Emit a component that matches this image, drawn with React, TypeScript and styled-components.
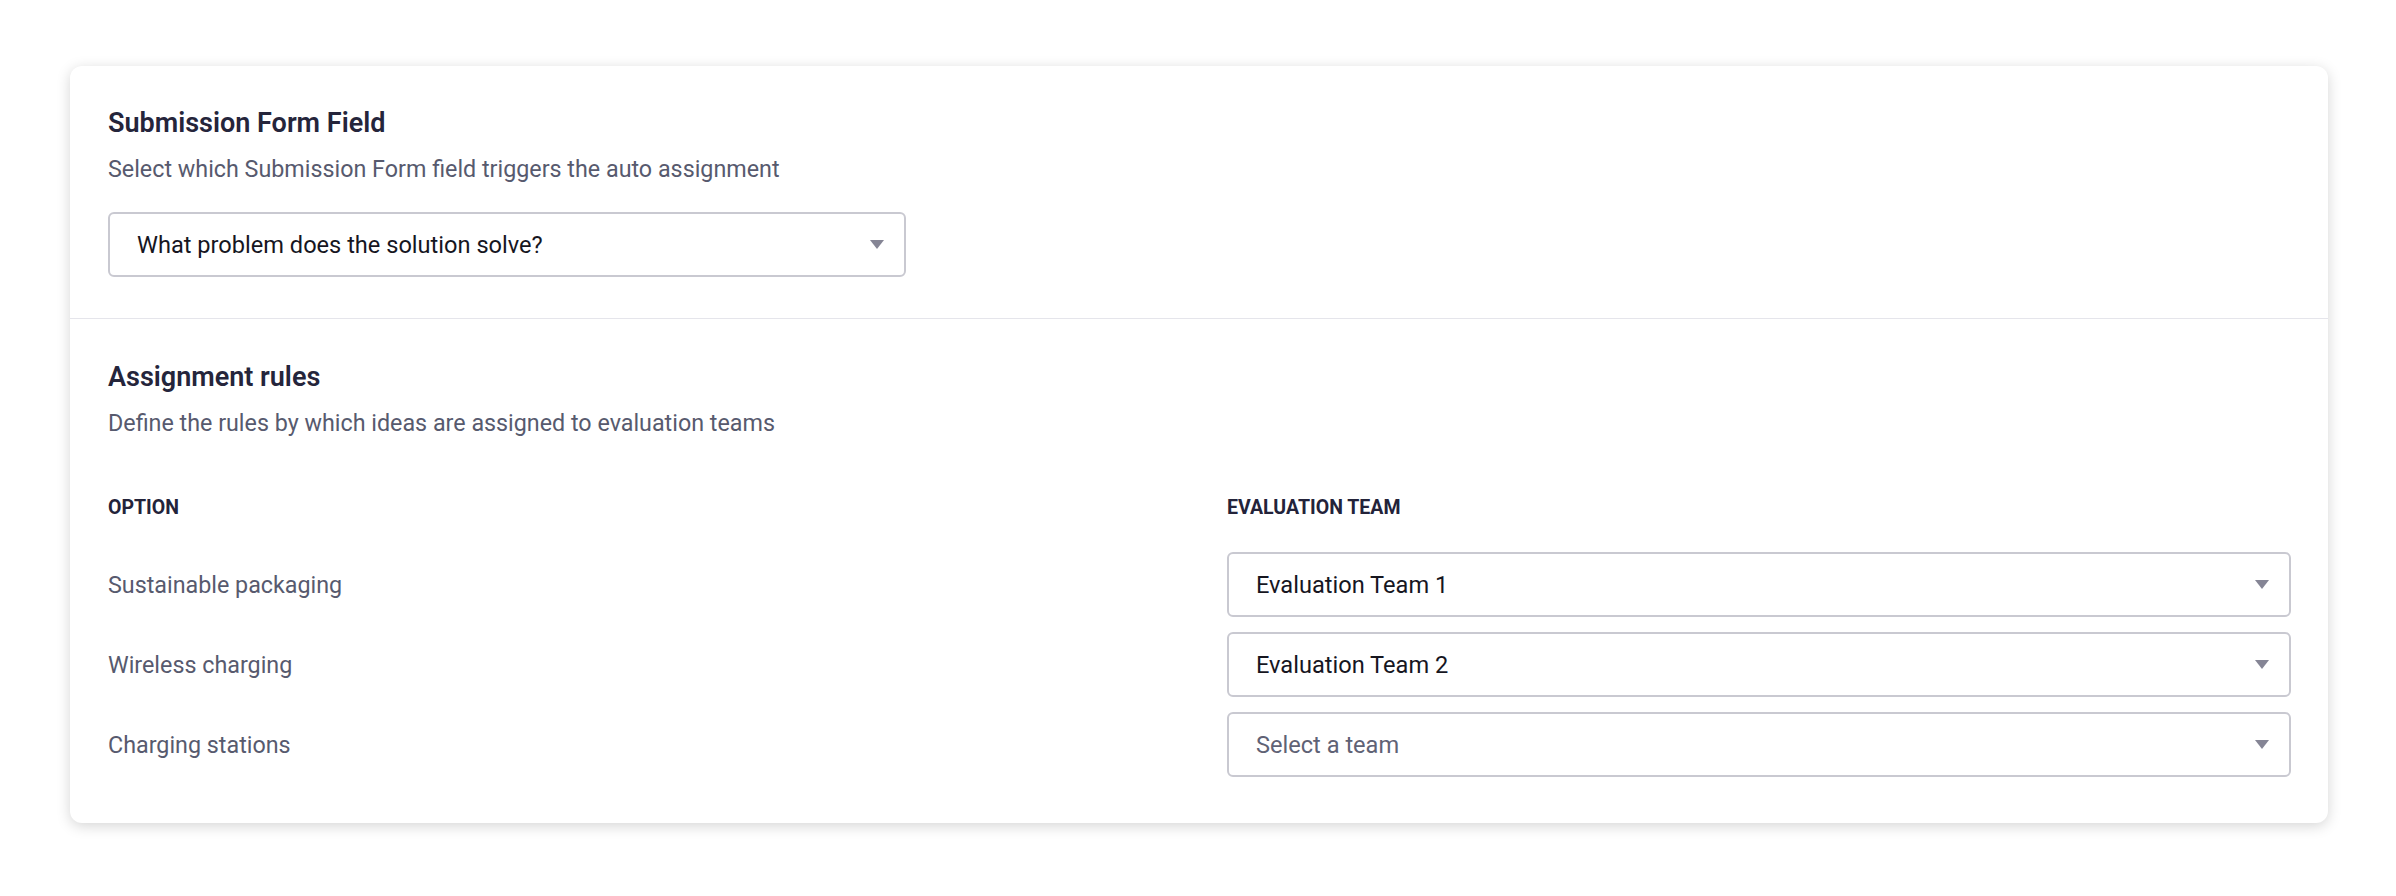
import React from 'react';
import styled, {createGlobalStyle} from 'styled-components';

const GlobalStyle = createGlobalStyle`
  html, body {
    margin: 0;
    padding: 0;
    background: #ffffff;
  }
  body {
    font-family: Roboto, "Noto Sans", sans-serif;
    -webkit-font-smoothing: antialiased;
  }
`;

const rules = [
  {option: 'Sustainable packaging', team: 'Evaluation Team 1'},
  {option: 'Wireless charging', team: 'Evaluation Team 2'},
  {option: 'Charging stations', team: null},
];

const Caret = () => (
  <svg width="14" height="9" viewBox="0 0 14 9">
    <path d="M0 0 L14 0 L7 9 Z" fill="#858595" />
  </svg>
);

const Dropdown = ({value, placeholder, wide}: {value: string | null; placeholder?: string; wide?: boolean}) => (
  <SelectBox $wide={wide}>
    <SelectText $placeholder={!value}>{value || placeholder}</SelectText>
    <Caret />
  </SelectBox>
);

const App = () => {
  return (
    <>
      <GlobalStyle />
      <Page>
        <Card>
          <Section>
            <Title>Submission Form Field</Title>
            <Subtitle>Select which Submission Form field triggers the auto assignment</Subtitle>
            <Dropdown value="What problem does the solution solve?" />
          </Section>
          <Divider />
          <RulesSection>
            <Title>Assignment rules</Title>
            <Subtitle>Define the rules by which ideas are assigned to evaluation teams</Subtitle>
            <RulesGrid>
              <ColumnHead>Option</ColumnHead>
              <ColumnHead>Evaluation team</ColumnHead>
              {rules.map((rule) => (
                <React.Fragment key={rule.option}>
                  <OptionLabel>{rule.option}</OptionLabel>
                  <Dropdown value={rule.team} placeholder="Select a team" wide />
                </React.Fragment>
              ))}
            </RulesGrid>
          </RulesSection>
        </Card>
      </Page>
    </>
  );
};

export default App;

const Page = styled.div`
  padding: 66px 68px 40px 70px;
`;

const Card = styled.div`
  background: #ffffff;
  border-radius: 12px;
  box-shadow: 0 3px 14px rgba(0, 0, 0, 0.17);
`;

const Section = styled.div`
  display: flex;
  flex-direction: column;
  align-items: flex-start;
  padding: 39px 37px 41px 38px;
`;

const RulesSection = styled(Section)`
  padding-top: 40px;
  padding-bottom: 46px;
`;

const Divider = styled.div`
  height: 1px;
  background: #e5e5eb;
`;

const Title = styled.h2`
  margin: 0;
  font-size: 27px;
  line-height: 36px;
  font-weight: 600;
  color: #25253b;
`;

const Subtitle = styled.p`
  margin: 12px 0 27px;
  font-size: 23.3px;
  line-height: 32px;
  font-weight: 400;
  color: #575a6e;
`;

const SelectBox = styled.div<{$wide?: boolean}>`
  box-sizing: border-box;
  display: flex;
  align-items: center;
  justify-content: space-between;
  width: ${(p) => (p.$wide ? '100%' : '798px')};
  height: 65px;
  padding: 0 20px 0 27px;
  border: 2px solid #c9c9d1;
  border-radius: 6px;
  background: #ffffff;
`;

const SelectText = styled.span<{$placeholder?: boolean}>`
  font-size: 23.6px;
  color: ${(p) => (p.$placeholder ? '#5f6275' : '#16161f')};
`;

const RulesGrid = styled.div`
  align-self: stretch;
  display: grid;
  grid-template-columns: 1fr 1fr;
  column-gap: 55px;
  row-gap: 15px;
  align-items: center;
  margin-top: 27px;
`;

const ColumnHead = styled.div`
  font-size: 19.5px;
  line-height: 30px;
  font-weight: 700;
  text-transform: uppercase;
  color: #23233a;
  margin-bottom: 14px;
`;

const OptionLabel = styled.div`
  font-size: 23.3px;
  color: #575a6e;
`;
